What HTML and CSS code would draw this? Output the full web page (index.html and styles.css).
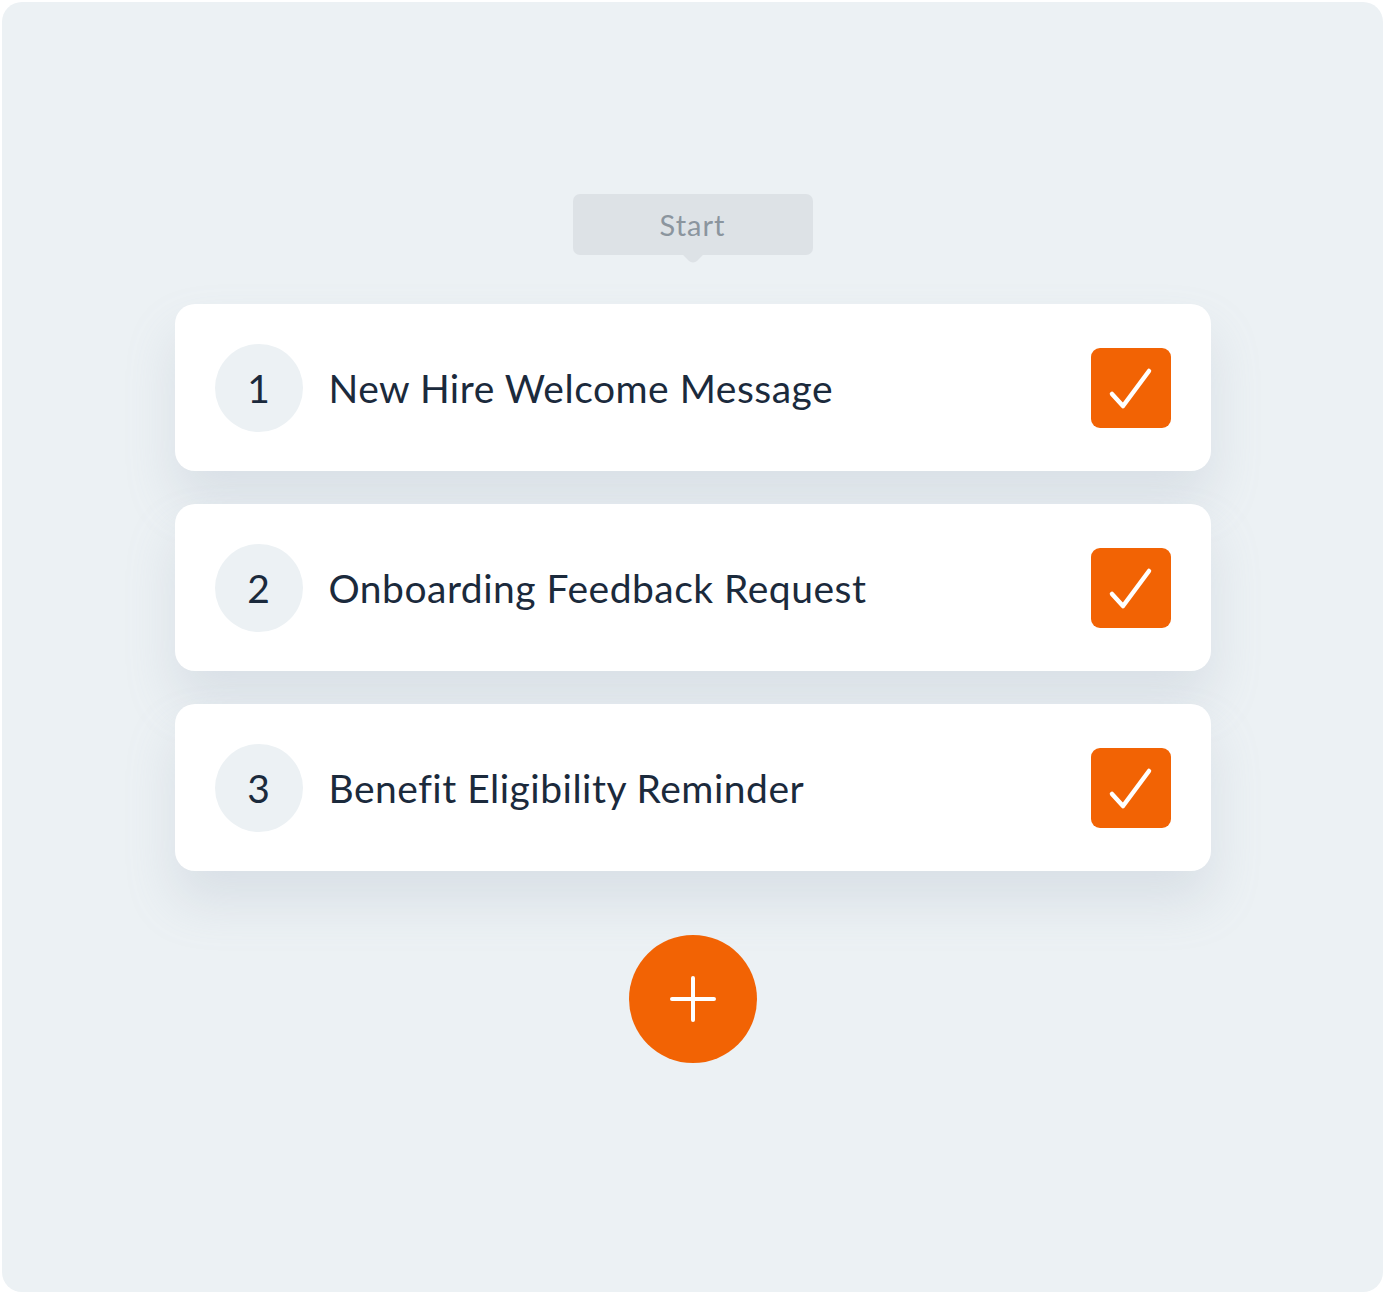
FILE: index.html
```html
<!DOCTYPE html>
<html>
<head>
<meta charset="utf-8">
<link rel="stylesheet" href="styles.css">
</head>
<body>
<div class="panel">
  <div class="start">Start</div>
  <div class="list">
    <div class="card">
      <div class="num">1</div>
      <div class="title">New Hire Welcome Message</div>
      <div class="check"><svg width="80" height="80" viewBox="0 0 80 80"><path d="M21 46 L32 58 L58 23" fill="none" stroke="#fff" stroke-width="4.5" stroke-linecap="round" stroke-linejoin="round"/></svg></div>
    </div>
    <div class="card">
      <div class="num">2</div>
      <div class="title">Onboarding Feedback Request</div>
      <div class="check"><svg width="80" height="80" viewBox="0 0 80 80"><path d="M21 46 L32 58 L58 23" fill="none" stroke="#fff" stroke-width="4.5" stroke-linecap="round" stroke-linejoin="round"/></svg></div>
    </div>
    <div class="card">
      <div class="num">3</div>
      <div class="title">Benefit Eligibility Reminder</div>
      <div class="check"><svg width="80" height="80" viewBox="0 0 80 80"><path d="M21 46 L32 58 L58 23" fill="none" stroke="#fff" stroke-width="4.5" stroke-linecap="round" stroke-linejoin="round"/></svg></div>
    </div>
  </div>
  <div class="add"><svg width="128" height="128" viewBox="0 0 128 128"><path d="M64 43 V85 M43 64 H85" stroke="#fff" stroke-width="4" stroke-linecap="round"/></svg></div>
</div>
</body>
</html>
```

FILE: styles.css
```css
html, body { margin: 0; padding: 0; background: #ffffff; }
body { font-family: "Lato", "Noto Sans", sans-serif; }
.panel {
  margin: 2px;
  height: 1290px;
  box-sizing: border-box;
  border-radius: 20px;
  background: #ecf1f4;
  padding-top: 192px;
  display: flex;
  flex-direction: column;
  align-items: center;
}
.start {
  position: relative;
  width: 240px;
  height: 61px;
  box-sizing: border-box;
  border-radius: 7px;
  background: #dde2e6;
  color: #8b959e;
  font-size: 29px;
  display: flex;
  align-items: center;
  justify-content: center;
  letter-spacing: 1px;
}
.start::after {
  content: "";
  position: absolute;
  left: 113px;
  bottom: -7px;
  width: 14px;
  height: 14px;
  background: #dde2e6;
  border-radius: 0 0 6px 0;
  transform: rotate(45deg);
}
.list {
  margin-top: 49px;
  display: flex;
  flex-direction: column;
  gap: 33px;
}
.card {
  width: 1036px;
  height: 167px;
  box-sizing: border-box;
  padding: 0 40px;
  background: #ffffff;
  border-radius: 20px;
  display: flex;
  align-items: center;
  box-shadow: 0 30px 50px rgba(150, 165, 180, 0.22);
}
.num {
  width: 88px;
  height: 88px;
  border-radius: 50%;
  background: #ecf1f4;
  color: #1b2a3c;
  font-size: 39px;
  display: flex;
  align-items: center;
  justify-content: center;
  flex: none;
}
.title {
  margin-left: 26px;
  flex: 1;
  color: #1b2a3c;
  font-size: 39px;
  letter-spacing: 0.5px;
}
.check {
  width: 80px;
  height: 80px;
  border-radius: 9px;
  background: #f26304;
  flex: none;
}
.check svg { display: block; }
.add {
  margin-top: 64px;
  width: 128px;
  height: 128px;
  border-radius: 50%;
  background: #f26304;
}
.add svg { display: block; }
```
